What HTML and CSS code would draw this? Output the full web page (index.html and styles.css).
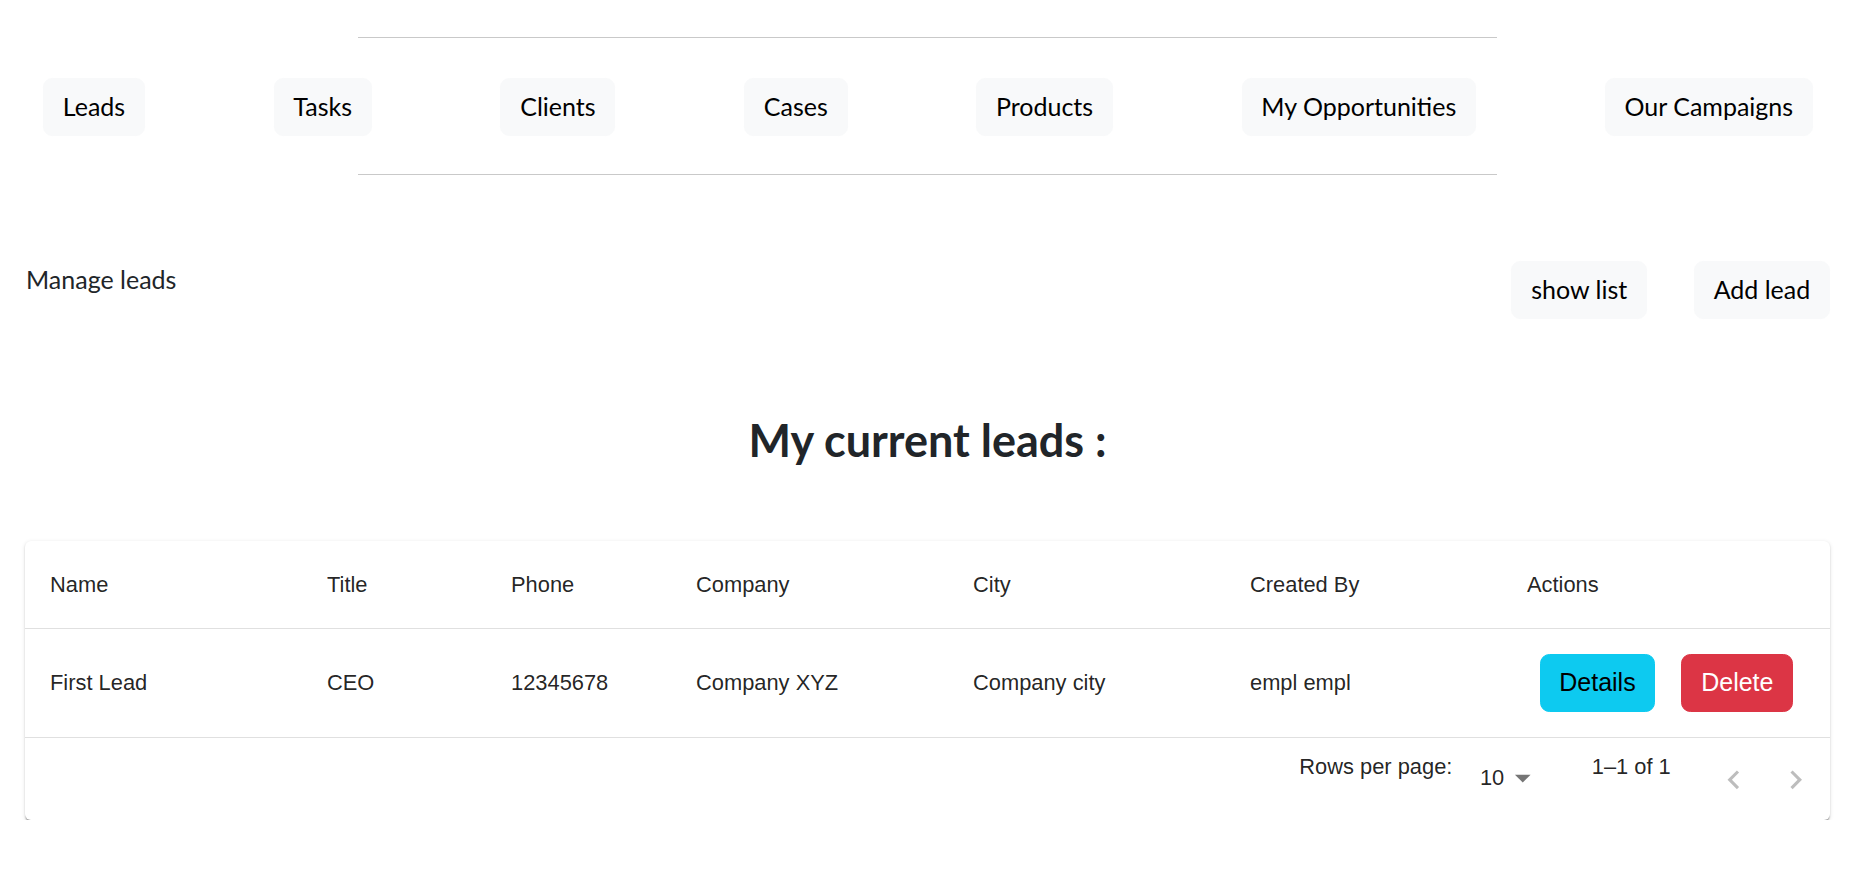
FILE: index.html
```html
<!DOCTYPE html>
<html lang="en">
<head>
<meta charset="utf-8">
<title>Manage leads</title>
<link rel="stylesheet" href="styles.css">
</head>
<body>
<header class="top">
  <hr class="rule rule-top">
  <nav class="nav">
    <button class="btn btn-light">Leads</button>
    <button class="btn btn-light">Tasks</button>
    <button class="btn btn-light">Clients</button>
    <button class="btn btn-light">Cases</button>
    <button class="btn btn-light">Products</button>
    <button class="btn btn-light">My Opportunities</button>
    <button class="btn btn-light">Our Campaigns</button>
  </nav>
  <hr class="rule rule-bottom">
</header>
<main class="container">
  <div class="toolbar">
    <p class="manage">Manage leads</p>
    <div class="actions-top">
      <button class="btn btn-light">show list</button>
      <button class="btn btn-light">Add lead</button>
    </div>
  </div>
  <h3 class="title">My current leads :</h3>
  <div class="card">
    <table class="table">
      <colgroup>
        <col class="c-wide"><col class="c-narrow"><col class="c-narrow2"><col class="c-wide"><col class="c-wide"><col class="c-wide"><col class="c-act">
      </colgroup>
      <thead>
        <tr>
          <th>Name</th><th>Title</th><th>Phone</th><th>Company</th><th>City</th><th>Created By</th><th>Actions</th>
        </tr>
      </thead>
      <tbody>
        <tr>
          <td>First Lead</td><td>CEO</td><td>12345678</td><td>Company XYZ</td><td>Company city</td><td>empl empl</td>
          <td class="act-cell">
            <div class="row-actions">
              <button class="tbtn tbtn-info">Details</button>
              <button class="tbtn tbtn-danger">Delete</button>
            </div>
          </td>
        </tr>
      </tbody>
    </table>
    <div class="pager">
      <p class="pager-label">Rows per page:</p>
      <div class="pager-select">
        <span class="pager-value">10</span>
        <svg class="pager-arrow" viewBox="0 0 24 24" width="37.5" height="37.5"><path d="M7 10l5 5 5-5z"/></svg>
      </div>
      <p class="pager-label pager-count">1–1 of 1</p>
      <div class="pager-nav">
        <span class="icon-btn"><svg viewBox="0 0 24 24" width="37.5" height="37.5"><path d="M15.41 7.41 14 6l-6 6 6 6 1.41-1.41L10.83 12z"/></svg></span>
        <span class="icon-btn"><svg viewBox="0 0 24 24" width="37.5" height="37.5"><path d="M10 6 8.59 7.41 13.17 12l-4.58 4.59L10 18l6-6z"/></svg></span>
      </div>
    </div>
  </div>
</main>
</body>
</html>
```
FILE: styles.css
```css
* { box-sizing: border-box; }

body {
  margin: 0;
  font-family: Lato, "Open Sans", sans-serif;
  font-size: 25px;
  line-height: 1.5;
  color: #212529;
  background: #fff;
}

.rule {
  border: 0;
  border-top: 1px solid #c9c9c9;
  width: 1139px;
  margin: 0 0 0 358px;
  height: 0;
}
.rule-top { margin-top: 37px; }
.rule-bottom { margin-top: 38px; }

.nav {
  display: flex;
  gap: 128.7px;
  padding-left: 43px;
  margin-top: 39.5px;
}

.btn {
  font-family: inherit;
  font-size: 25px;
  line-height: 1.5;
  padding: 9.375px 18.75px;
  border-radius: 9.4px;
  cursor: pointer;
}
.btn-light {
  background: #f8f9fa;
  border: 1px solid #f8f9fa;
  color: #000;
}

.container {
  padding: 0 39px 0 25px;
}

.toolbar {
  display: flex;
  justify-content: space-between;
  align-items: flex-start;
  margin-top: 86px;
}
.manage {
  margin: 0;
  padding-left: 1px;
}
.actions-top {
  display: flex;
  gap: 47px;
}

.title {
  margin: 93.5px 0 0;
  text-align: center;
  font-size: 45px;
  font-weight: 700;
  line-height: 1.2;
  color: #212529;
}

.card {
  margin-top: 74.5px;
  border-radius: 6px;
  background: #fff;
  box-shadow: 0 3px 1.5px -1.5px rgba(0,0,0,0.2), 0 1.5px 1.5px 0 rgba(0,0,0,0.14), 0 1.5px 4.5px 0 rgba(0,0,0,0.12);
  font-family: "Liberation Sans", Arial, sans-serif;
  font-size: 21.875px;
  color: rgba(0,0,0,0.87);
  overflow: hidden;
}

.table {
  width: 100%;
  border-collapse: collapse;
  table-layout: fixed;
}
.c-wide { width: 277px; }
.c-narrow { width: 184px; }
.c-narrow2 { width: 185px; }
.c-act { width: 328px; }

.table th,
.table td {
  text-align: left;
  font-weight: 400;
  line-height: 37.5px;
  padding: 24.75px 25px;
  border-bottom: 1px solid #e0e0e0;
  vertical-align: middle;
  white-space: nowrap;
}
.table td { padding: 25px; }
.table td.act-cell { padding: 25px 37px 25px 37.5px; }

.row-actions {
  display: flex;
  gap: 26px;
}
.tbtn {
  font-family: "Liberation Sans", Arial, sans-serif;
  font-size: 25px;
  line-height: 1.5;
  padding: 9.375px 18.75px;
  border-radius: 9.4px;
  border: 1px solid transparent;
}
.tbtn-info { background: #0dcaf0; border-color: #0dcaf0; color: #000; }
.tbtn-danger { background: #dc3545; border-color: #dc3545; color: #fff; }

.pager {
  display: flex;
  justify-content: flex-end;
  align-items: center;
  height: 82px;
  padding-right: 3px;
}
.pager-label {
  margin: 0 0 25px;
  line-height: 37.5px;
}
.pager-select {
  position: relative;
  margin: -3px 50px 0 12.5px;
  padding: 0 37.5px 0 15px;
  line-height: 31.4px;
  height: 31.4px;
}
.pager-arrow {
  position: absolute;
  right: 0;
  top: -3px;
  fill: rgba(0,0,0,0.54);
}
.pager-count { margin-right: 0; }
.pager-nav {
  display: flex;
  margin-left: 31.25px;
}
.icon-btn {
  display: flex;
  padding: 12.5px;
  fill: rgba(0,0,0,0.26);
}
```
